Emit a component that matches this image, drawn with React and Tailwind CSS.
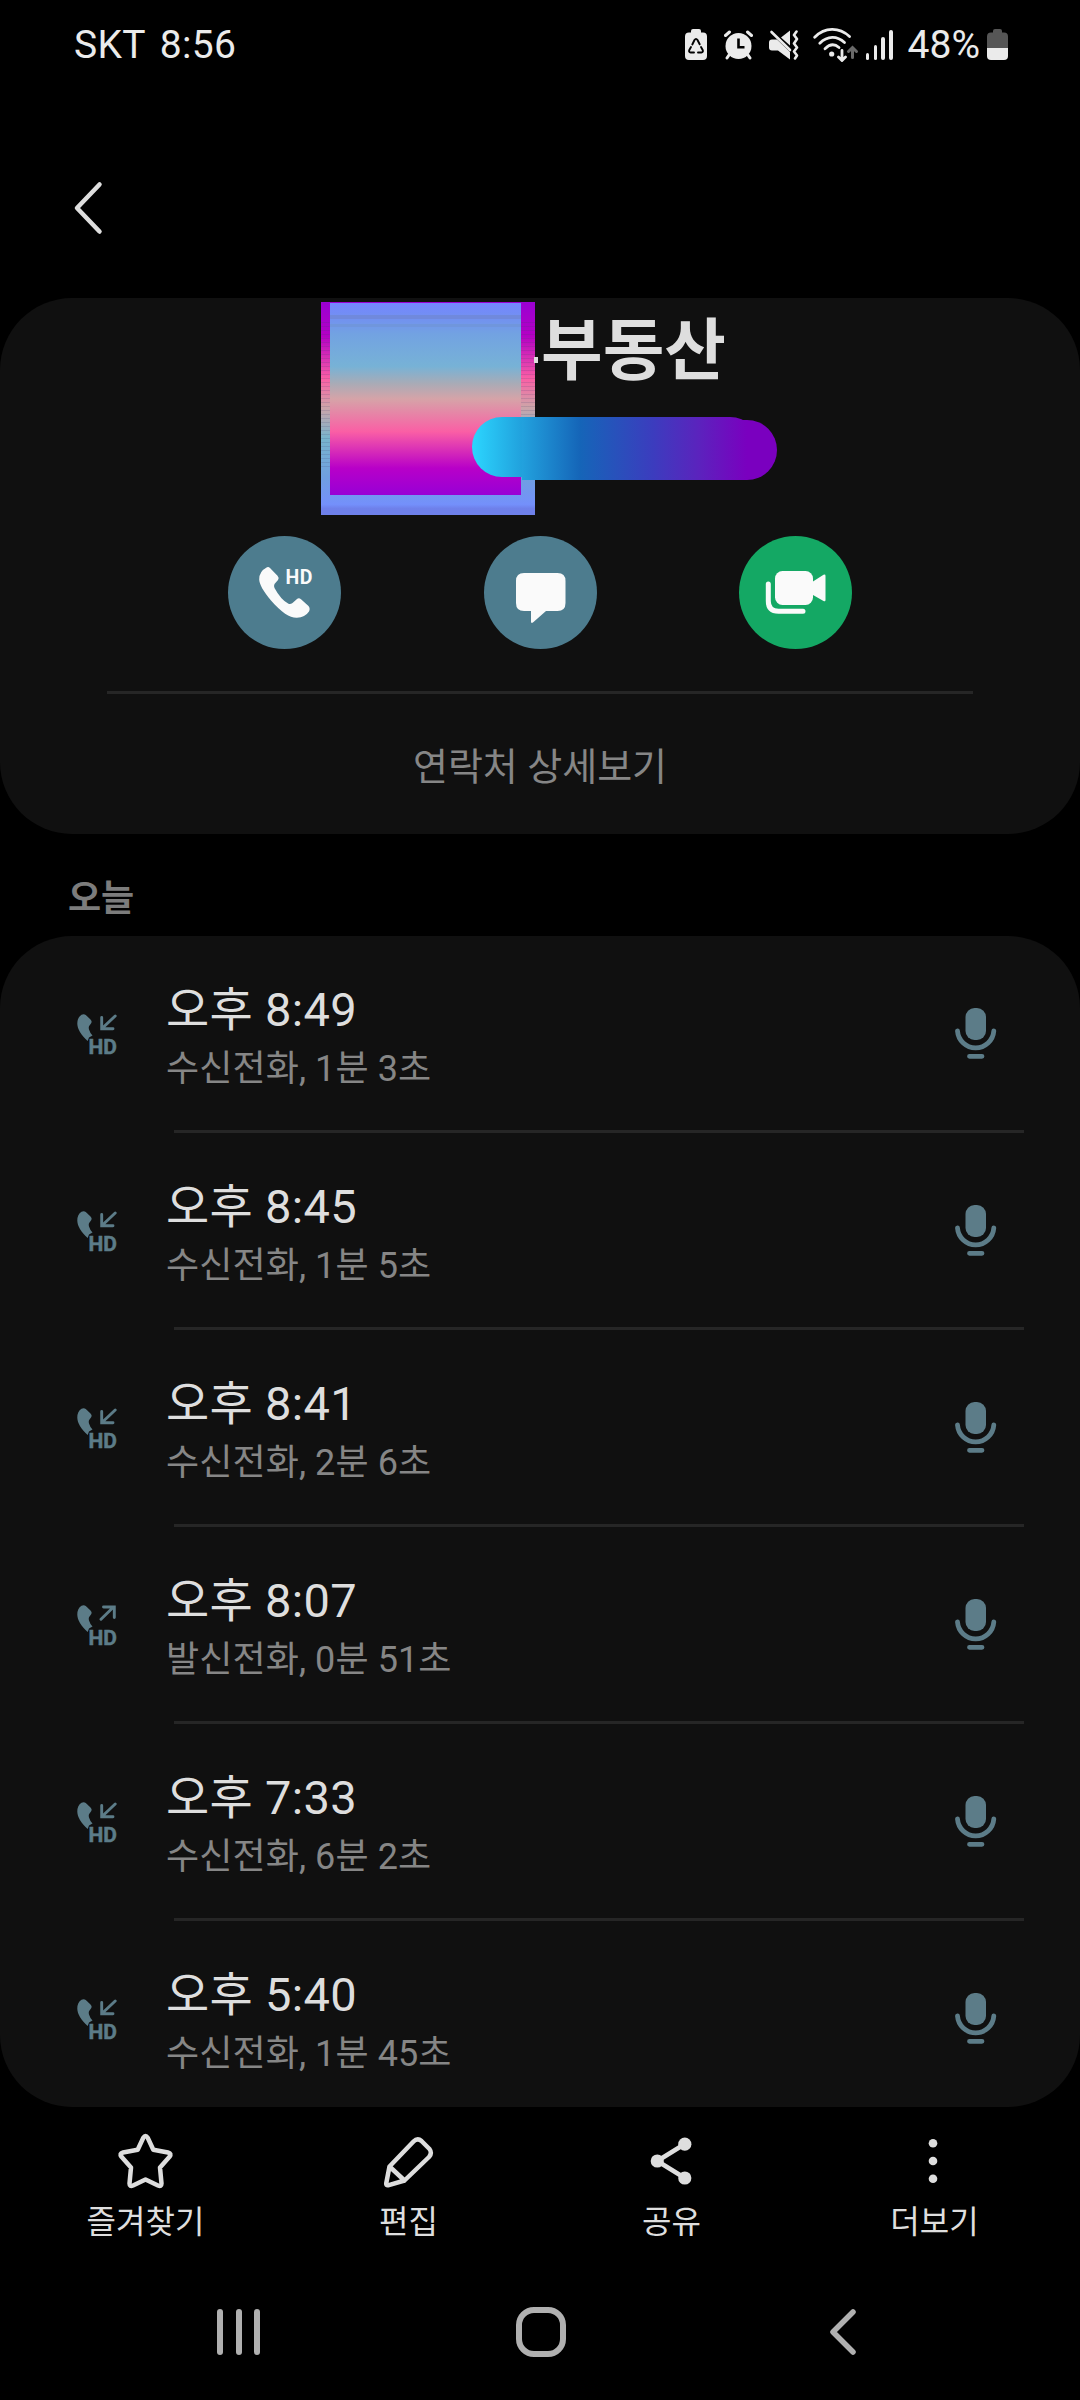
const calls = [
  { time: "오후 8:49", detail: "수신전화, 1분 3초", type: "in" },
  { time: "오후 8:45", detail: "수신전화, 1분 5초", type: "in" },
  { time: "오후 8:41", detail: "수신전화, 2분 6초", type: "in" },
  { time: "오후 8:07", detail: "발신전화, 0분 51초", type: "out" },
  { time: "오후 7:33", detail: "수신전화, 6분 2초", type: "in" },
  { time: "오후 5:40", detail: "수신전화, 1분 45초", type: "in" },
];

const StatusBar = () => (
  <div className="flex h-[90px] items-center pl-[74px] pr-[72px] text-[39px] leading-[46px] text-[#ebebeb]">
    <span className="tracking-[0.3px]">SKT</span>
    <span className="ml-[14px] -mt-[1px] tracking-[0.3px]">8:56</span>
    <div className="ml-auto flex items-center">
      <svg className="h-[32px] w-[22px]" viewBox="0 0 22 32" fill="#ebebeb">
        <path d="M6 3.5V2Q6 0 8 0h6q2 0 2 2v1.500h2q4 0 4 4V27q0 4-4 4H4q-4 0-4-4V7.500q0-4 4-4Z" />
        <g fill="none" stroke="#000" strokeWidth="1.900" strokeLinecap="round" strokeLinejoin="round">
          <path d="M7.300 15.500 9.500 11q1.500-2.200 3 0l2.200 4.300" />
          <path d="M16 18l1.800 3.200q.6 2-1.500 2.300H13" />
          <path d="M6 18l-1.800 3.200q-.6 2 1.500 2.300H9" />
        </g>
      </svg>
      <svg className="ml-[17px] h-[30px] w-[29px]" viewBox="0 0 29 30">
        <circle cx="14.500" cy="16" r="13" fill="#ebebeb" />
        <g fill="none" stroke="#ebebeb" strokeWidth="3" strokeLinecap="round">
          <path d="M1.500 5.500 5.500 2M27.500 5.500 23.500 2M5 25l-2 3M24 25l2 3" />
        </g>
        <path d="M14.500 8.500v8.700h6" fill="none" stroke="#000" strokeWidth="2.600" />
      </svg>
      <svg className="ml-[16px] h-[30px] w-[30px]" viewBox="0 0 30 30">
        <path
          d="M3 9.500h5L21 22v7.500L9 20.500H3Q0 20.500 0 17.500v-5q0-3 3-3ZM12 7.500 21 .5v15Z"
          fill="#ebebeb"
        />
        <path d="M2.500 2 21 20" stroke="#ebebeb" strokeWidth="2.600" strokeLinecap="round" />
        <path
          d="M27.500 1.500l-2.500 3.500 3 4-3 4.500 3 4-3 4 3 4-2 3"
          fill="none"
          stroke="#ebebeb"
          strokeWidth="2.600"
          strokeLinecap="round"
          strokeLinejoin="round"
        />
      </svg>
      <svg className="ml-[14px] h-[34px] w-[46px]" viewBox="0 0 46 34" fill="none" strokeLinecap="round">
        <g stroke="#ebebeb" strokeWidth="2.800">
          <path d="M1.700 9.200C12-1 26-1 36.500 8.500" />
          <path d="M6.800 15.200C14.500 7.500 24 7.500 31.500 14.500" />
          <path d="M12 20.700C17 15.800 22 16 26 19.500" />
          <path d="M29 22.500V32M25.500 29l3.500 3.500L32.500 29" />
        </g>
        <circle cx="18.700" cy="26" r="2.600" fill="#ebebeb" />
        <path d="M39.500 29.500V20M35.500 23.500l4-4 4 4" stroke="#6a6a6a" strokeWidth="3" />
      </svg>
      <div className="ml-[7px] flex h-[30px] items-end gap-[4.300px]">
        <i className="h-[7px] w-[3.500px] rounded-full bg-[#ebebeb]" />
        <i className="h-[15px] w-[3.500px] rounded-full bg-[#ebebeb]" />
        <i className="h-[23px] w-[3.500px] rounded-full bg-[#ebebeb]" />
        <i className="h-[30px] w-[3.500px] rounded-full bg-[#ebebeb]" />
      </div>
      <span className="ml-[15px] -mt-[1px]">48%</span>
      <svg className="ml-[7px] h-[32px] w-[21px]" viewBox="0 0 21 32">
        <path d="M6 3.500V2Q6 0 8 0h5q2 0 2 2v1.500h2q4 0 4 4V20H0V7.500q0-4 4-4Z" fill="#565656" />
        <path d="M0 19h21v8q0 4-4 4H4q-4 0-4-4Z" fill="#ebebeb" />
      </svg>
    </div>
  </div>
);

const Mic = () => (
  <svg className="mt-[72px] h-[52px] w-[42px]" viewBox="0 0 42 52">
    <rect x="10.500" y="0" width="20.500" height="32" rx="9" fill="#5c7c88" />
    <path
      d="M2.500 23a18.200 18.200 0 0 0 36.300 0M14.500 48.300h12.500"
      fill="none"
      stroke="#5c7c88"
      strokeWidth="4.800"
      strokeLinecap="round"
    />
  </svg>
);

const CallTypeIcon = ({ type }) => (
  <svg className="mt-[78px] h-[50px] w-[47px]" viewBox="0 0 47 50">
    <path
      d="M4.500.8Q6.800-.6 8.800 1L13.500 5.500Q15.500 7.500 14 9.500L12.500 11.500Q11.300 13 12 15.500Q13 19 15.500 21.500L12 23.500L10.700 27C4 21 .3 15 .3 9.500Q.3 3.500 4.500.8Z"
      fill="#5c7c88"
    />
    <path
      d={type === "in" ? "M38.200 2 25.500 14M24.700 3.500V14.700H36" : "M24 14.300 36.500 2M26.500 2H37.300V12.500"}
      fill="none"
      stroke="#5c7c88"
      strokeWidth="2.900"
      strokeLinecap="round"
    />
    <text x="11.500" y="39.800" fontSize="21" fontWeight="700" textLength="28.500" fill="#5c7c88" stroke="#5c7c88" strokeWidth="0.500">
      HD
    </text>
  </svg>
);

const CallRow = ({ call, last }) => (
  <div>
    <div className={last ? "flex h-[186px] pl-[77px] pr-[83px]" : "flex h-[194px] pl-[77px] pr-[83px]"}>
      <CallTypeIcon type={call.type} />
      <div className="ml-[42px] mt-[47px] flex-1">
        <p className="text-[47px] leading-[54px] tracking-[0.3px] text-[#dedede]">{call.time}</p>
        <p className="mt-[5px] text-[36px] leading-[54px] tracking-[0.1px] text-[#868686]">{call.detail}</p>
      </div>
      <Mic />
    </div>
    {!last && <div className="ml-[174px] mr-[56px] h-[3px] bg-[#262626]" />}
  </div>
);

const ContactCard = () => (
  <section className="relative h-[536px] rounded-[72px] bg-[#101010]">
    <h1 className="ml-[541px] pt-[8px] text-[67px] leading-[90px] font-bold text-[#dedede]">
      부동산
    </h1>

    {/* cover over the avatar and the start of the name */}
    <div className="absolute left-[321px] top-[4px] h-[213px] w-[214px] bg-[linear-gradient(to_bottom,#9a00d2_0%,#b400c4_16%,#fa5fa5_36%,#cfa3a8_49%,#78b4cd_64%,#6fa0e0_82%,#7490fb_95%,#6e80ea_97%)]">
      <div className="absolute left-0 top-[20px] h-[146px] w-[214px] bg-[repeating-linear-gradient(to_bottom,rgba(60,60,110,0.16)_0px,rgba(60,60,110,0.16)_1px,transparent_1px,transparent_4px)]" />
      <div className="absolute left-[9px] top-[1px] h-[192px] w-[191px] bg-[linear-gradient(to_bottom,#7486ff_0%,#7291f0_8%,#72a2e2_16%,#77b2d6_33%,#a9abb6_42%,#d6a3a8_50%,#fa5fa5_67%,#b800c8_86%,#9800d6_100%)]" />
      <div className="absolute left-[9px] top-[13px] h-[4px] w-[191px] bg-[#7089dc]" />
      <div className="absolute left-[9px] top-[22px] h-[3px] w-[191px] bg-[#7096dc]" />
    </div>
    <div className="absolute left-[534px] top-[59px] h-[6px] w-[4px] bg-[#dedede]" />
    <div className="absolute left-[472px] top-[119px] h-[60px] w-[288px] rounded-full bg-[linear-gradient(to_right,#2cd6ff_0px,#22a6e0_45px,#1565b8_108px,#3b3dbe_180px,#5a24bd_225px,#7a00bf_275px)]" />
    <div className="absolute left-[522px] top-[122px] h-[60px] w-[255px] rounded-r-full bg-[linear-gradient(to_right,#22a2de_0px,#1565b8_58px,#3b3dbe_130px,#5a24bd_175px,#7a00bf_225px)]" />

    <div className="mt-[140px] flex justify-between px-[228px]">
      <div className="h-[113px] w-[113px] rounded-full bg-[#4d7c8e]">
        <svg viewBox="0 0 113 113" fill="#fafafa">
          <path
            transform="translate(26 26)"
            d="M13 5.300Q14.500 4.500 16 6L23.500 13.800Q25.500 16 24 18L20.500 22Q19.500 24 20.500 26Q27 38 34.500 41.800Q36.500 42.500 38.500 41L43 37Q45 35.500 47 37.300L54.500 44Q56.500 46.500 55 49.500Q51 55.500 43 55.700C36 56 28 51 17 38.500C9 29 5.300 22 5.200 17.500Q5 9.500 13 5.300Z"
          />
          <text x="57.500" y="47.500" fontSize="19.500" fontWeight="700" textLength="27">
            HD
          </text>
        </svg>
      </div>
      <div className="h-[113px] w-[113px] rounded-full bg-[#4d7c8e]">
        <svg viewBox="0 0 113 113" fill="#fafafa">
          <path d="M40 37H73.500Q81.500 37 81.500 45V67Q81.500 75 73.500 75H62L49.500 86Q47 88 47 85.500V75H40Q32 75 32 67V45Q32 37 40 37Z" />
        </svg>
      </div>
      <div className="h-[113px] w-[113px] rounded-full bg-[#14a864]">
        <svg viewBox="0 0 113 113" fill="#fafafa">
          <rect x="36" y="35" width="38" height="34" rx="7.500" />
          <path d="M74 45.500 84.500 38.800Q86.500 38 86.500 40V64Q86.500 66 84.500 65L74 59Z" />
          <path
            d="M29.300 48V65Q29.300 75.300 39.500 75.300H64"
            fill="none"
            stroke="#fafafa"
            strokeWidth="5"
            strokeLinecap="round"
          />
        </svg>
      </div>
    </div>
    <div className="mx-[107px] mt-[42px] h-[3px] bg-[#262626]" />
    <p className="mt-[46px] text-center text-[38px] leading-[54px] text-[#868686]">연락처 상세보기</p>
  </section>
);

const ToolButton = ({ label, children }) => (
  <div className="flex w-[263px] flex-col items-center">
    <svg className="h-[60px] w-[60px]" viewBox="0 0 60 60" fill="none" stroke="#dedede" strokeWidth="4.500" strokeLinecap="round" strokeLinejoin="round">
      {children}
    </svg>
    <span className="mt-[11px] text-[32px] leading-[40px] text-[#dedede]">{label}</span>
  </div>
);

const App = () => {
  return (
    <div
      lang="ko"
      className="flex h-[2400px] w-[1080px] flex-col overflow-hidden bg-black font-[Roboto,'Noto_Sans_CJK_KR',sans-serif]"
    >
      <StatusBar />
      <header className="h-[208px] pl-[72px] pt-[90px]">
        <svg className="h-[56px] w-[32px]" viewBox="0 0 32 56">
          <path d="M27.500 4.500 5 28l22.500 23.500" fill="none" stroke="#dedede" strokeWidth="4.500" strokeLinecap="round" strokeLinejoin="round" />
        </svg>
      </header>

      <ContactCard />

      <h2 className="h-[102px] pl-[68px] pt-[38px] text-[36px] leading-[54px] font-bold text-[#7c7c7c]">오늘</h2>

      <section className="h-[1171px] rounded-[72px] bg-[#101010]">
        {calls.map((call, index) => (
          <CallRow key={call.time} call={call} last={index === calls.length - 1} />
        ))}
      </section>

      <nav className="flex h-[163px] justify-center pt-[24px]">
        <ToolButton label="즐겨찾기">
          <path d="M27.300 6.700Q29.500 3.500 31.700 6.700L37.300 18.800 52 21.500Q56 22.500 53.500 25.800L44 36.500 45.500 52.500Q45.500 56 42 54.500L29.500 48.500 17 54.500Q13.500 56 13.500 52.500L15 36.500 5.500 25.800Q3 22.500 7 21.500L21.700 18.800Z" />
        </ToolButton>
        <ToolButton label="편집">
          <path d="M10.500 35.500 34.500 10.500Q38.500 6.500 42.500 10L50.500 18Q53.500 22 50 26L25.500 49.500 9 54.300Q7 54.500 7.200 52.500ZM10.500 35.500 25.500 49.500" />
        </ToolButton>
        <ToolButton label="공유">
          <path d="M42.800 13 15.300 30 42.800 47" />
          <g fill="#dedede" stroke="none">
            <circle cx="42.800" cy="13.200" r="6.600" />
            <circle cx="15.300" cy="30" r="6.600" />
            <circle cx="42.800" cy="47" r="6.600" />
          </g>
        </ToolButton>
        <ToolButton label="더보기">
          <g fill="#dedede" stroke="none">
            <circle cx="28" cy="12.200" r="4.300" />
            <circle cx="28" cy="30" r="4.300" />
            <circle cx="28" cy="47.800" r="4.300" />
          </g>
        </ToolButton>
      </nav>

      <footer className="flex h-[123px] items-center pl-[217px]">
        <div className="flex gap-[12.500px]">
          <i className="h-[46px] w-[6px] rounded-full bg-[#b0b0b0]" />
          <i className="h-[46px] w-[6px] rounded-full bg-[#b0b0b0]" />
          <i className="h-[46px] w-[6px] rounded-full bg-[#b0b0b0]" />
        </div>
        <div className="ml-[256px] h-[50px] w-[50px] rounded-[18px] border-[6px] border-[#b0b0b0]" />
        <svg className="ml-[262px] h-[50px] w-[30px]" viewBox="0 0 30 50">
          <path d="M25 5 5 25l20 20" fill="none" stroke="#b0b0b0" strokeWidth="5.500" strokeLinecap="round" strokeLinejoin="round" />
        </svg>
      </footer>
    </div>
  );
};

export default App;
